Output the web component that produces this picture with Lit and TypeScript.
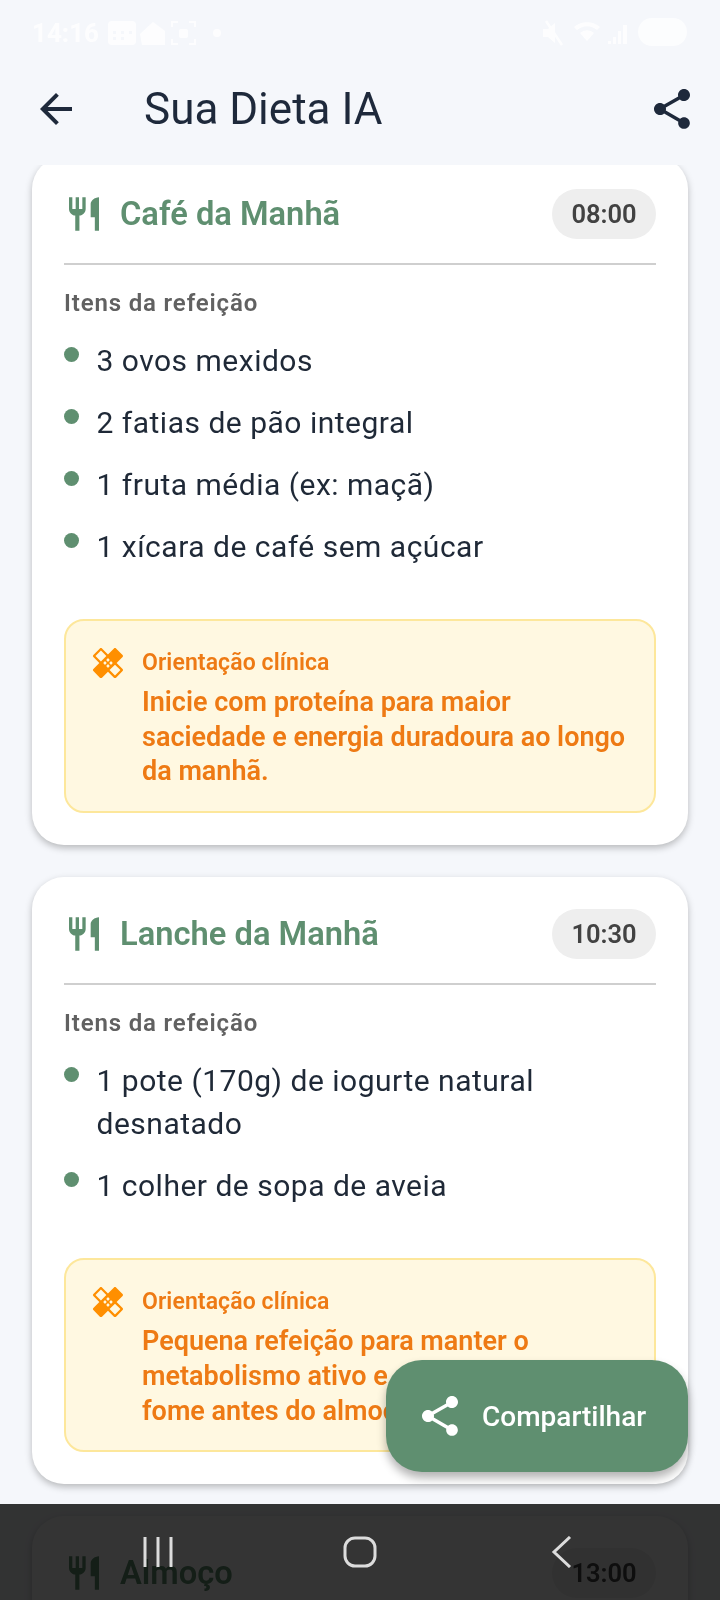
import { LitElement, html, css, svg } from "lit";
import { customElement } from "lit/decorators.js";

interface Meal {
  title: string;
  time: string;
  items: string[];
  note: string;
}

const MEALS: Meal[] = [
  {
    title: "Café da Manhã",
    time: "08:00",
    items: ["3 ovos mexidos", "2 fatias de pão integral", "1 fruta média (ex: maçã)", "1 xícara de café sem açúcar"],
    note: "Inicie com proteína para maior saciedade e energia duradoura ao longo da manhã.",
  },
  {
    title: "Lanche da Manhã",
    time: "10:30",
    items: ["1 pote (170g) de iogurte natural desnatado", "1 colher de sopa de aveia"],
    note: "Pequena refeição para manter o metabolismo ativo e evitar excesso de fome antes do almoço.",
  },
  {
    title: "Almoço",
    time: "13:00",
    items: [],
    note: "",
  },
];

const ICON_SHARE =
  "M18 16.08c-.76 0-1.44.3-1.96.77L8.91 12.7c.05-.23.09-.46.09-.7s-.04-.47-.09-.7l7.05-4.11c.54.5 1.25.81 2.04.81 1.66 0 3-1.34 3-3s-1.34-3-3-3-3 1.34-3 3c0 .24.04.47.09.7L8.04 9.81C7.5 9.31 6.79 9 6 9c-1.66 0-3 1.34-3 3s1.34 3 3 3c.79 0 1.5-.31 2.04-.81l7.12 4.16c-.05.21-.08.43-.08.65 0 1.61 1.31 2.92 2.92 2.92 1.61 0 2.92-1.31 2.92-2.92s-1.31-2.92-2.92-2.92z";
const ICON_BACK = "M20 11H7.83l5.59-5.59L12 4l-8 8 8 8 1.41-1.41L7.83 13H20v-2z";
const ICON_FOOD =
  "M11 9H9V2H7v7H5V2H3v7c0 2.12 1.66 3.84 3.75 3.97V22h2.5v-9.03C11.34 12.84 13 11.12 13 9V2h-2v7zm5-3v8h2.5v8H21V2c-2.76 0-5 2.24-5 4z";
const ICON_HEAL =
  "M17.73 12.02l3.98-3.98c.39-.39.39-1.02 0-1.41l-4.34-4.34c-.39-.39-1.02-.39-1.41 0l-3.98 3.98L8 2.29C7.8 2.1 7.55 2 7.29 2c-.25 0-.51.1-.7.29L2.25 6.63c-.39.39-.39 1.02 0 1.41l3.98 3.98L2.25 16c-.39.39-.39 1.02 0 1.41l4.34 4.34c.39.39 1.02.39 1.41 0l3.98-3.98 3.98 3.98c.2.2.45.29.71.29.26 0 .51-.1.71-.29l4.34-4.34c.39-.39.39-1.02 0-1.41l-3.99-3.98zM12 9c.55 0 1 .45 1 1s-.45 1-1 1-1-.45-1-1 .45-1 1-1zm-4.71 1.96L3.66 7.34l3.63-3.63 3.62 3.62-3.62 3.63zM10 13c-.55 0-1-.45-1-1s.45-1 1-1 1 .45 1 1-.45 1-1 1zm2 2c-.55 0-1-.45-1-1s.45-1 1-1 1 .45 1 1-.45 1-1 1zm2-4c.55 0 1 .45 1 1s-.45 1-1 1-1-.45-1-1 .45-1 1-1zm2.66 9.34l-3.63-3.62 3.63-3.63 3.62 3.62-3.62 3.63z";

function icon(d: string, size: number) {
  return html`<svg class="icon" width=${size} height=${size} viewBox="0 0 24 24" fill="currentColor">
    ${svg`<path d=${d}></path>`}
  </svg>`;
}

@customElement("app-root")
export class AppRoot extends LitElement {
  private renderStatusBar() {
    return html`
      <div class="status">
        <span class="clock">14:16</span>
        <svg width="120" height="32" viewBox="0 0 120 32" fill="#fff">
          <path d="M5 4h20a4 4 0 0 1 4 4v16a4 4 0 0 1-4 4H5a4 4 0 0 1-4-4V8a4 4 0 0 1 4-4zM6 14v3h3v-3zM14 14v3h3v-3zM22 14v3h3v-3zM6 20v3h3v-3zM14 20v3h3v-3z" fill-rule="evenodd"></path>
          <path d="M33 17 L46 5 L58 14 L58 28 L35 28 Z"></path>
          <path d="M65 10V5h6M82 5h6v5M88 22v5h-6M71 27h-6v-5" fill="none" stroke="#fff" stroke-width="2"></path>
          <rect x="72" y="12" width="9" height="9" rx="2"></rect>
          <circle cx="110" cy="16" r="4"></circle>
        </svg>
        <span class="spacer"></span>
        <svg width="156" height="32" viewBox="0 0 156 32" fill="#fff">
          <path d="M11 12h5l7-6v20l-7-6h-5z"></path>
          <path d="M14 4l16 24" stroke="#fff" stroke-width="2.5" fill="none"></path>
          <path d="M42 10a20 20 0 0 1 26 0l-3 3a15 15 0 0 0-20 0zM48 16a10 10 0 0 1 14 0l-7 8z"></path>
          <path d="M76 24h3v3h-3zM81 20h3v7h-3zM86 14h3v13h-3zM91 8h4v19h-4z"></path>
          <rect x="106" y="1" width="49" height="28" rx="14" opacity="0.85"></rect>
        </svg>
      </div>
    `;
  }

  private renderMeal(meal: Meal) {
    return html`
      <section class="card">
        <header class="card-head">
          <span class="food">${icon(ICON_FOOD, 40)}</span>
          <h2>${meal.title}</h2>
          <span class="chip">${meal.time}</span>
        </header>
        <div class="label">Itens da refeição</div>
        <ul>
          ${meal.items.map((item) => html`<li>${item}</li>`)}
        </ul>
        ${meal.note
          ? html`
              <div class="note">
                <span class="heal">${icon(ICON_HEAL, 36)}</span>
                <div>
                  <div class="note-title">Orientação clínica</div>
                  <p>${meal.note}</p>
                </div>
              </div>
            `
          : ""}
      </section>
    `;
  }

  protected render() {
    return html`
      <div class="screen">
        ${this.renderStatusBar()}
        <div class="appbar">
          <span class="back">${icon(ICON_BACK, 48)}</span>
          <h1>Sua Dieta IA</h1>
          <span class="share">${icon(ICON_SHARE, 48)}</span>
        </div>
        <main class="list">
          <div class="scroll">${MEALS.map((m) => this.renderMeal(m))}</div>
        </main>
        <button class="fab">${icon(ICON_SHARE, 48)}<span>Compartilhar</span></button>
        <div class="nav-shade"></div>
        <nav class="nav">
          <svg width="32" height="32" viewBox="0 0 32 32" fill="none" stroke="#dcdcdc" stroke-width="3">
            <path d="M3 1v30M16 1v30M29 1v30"></path>
          </svg>
          <svg width="34" height="32" viewBox="0 0 34 32" fill="none" stroke="#dcdcdc" stroke-width="3">
            <rect x="2" y="2" width="30" height="28" rx="10"></rect>
          </svg>
          <svg width="22" height="32" viewBox="0 0 22 32" fill="none" stroke="#dcdcdc" stroke-width="3">
            <path d="M19 1 L3 16 L19 31"></path>
          </svg>
        </nav>
      </div>
    `;
  }

  static styles = css`
    :host {
      display: block;
      font-family: Roboto, "Noto Sans", sans-serif;
      color: #1f2937;
    }

    .screen {
      position: relative;
      display: flex;
      flex-direction: column;
      width: 720px;
      height: 1600px;
      overflow: hidden;
      background: #f5f7fb;
    }

    .icon {
      display: block;
    }

    .status {
      display: flex;
      align-items: center;
      gap: 8px;
      height: 60px;
      padding: 6px 32px 0;
      box-sizing: border-box;
      flex: none;
      opacity: 0.85;
    }

    .clock {
      font-size: 26px;
      font-weight: 700;
      color: #fff;
    }

    .spacer {
      flex: 1;
    }

    .appbar {
      display: flex;
      align-items: center;
      height: 98px;
      margin-bottom: 7px;
      padding: 0 24px 0 32px;
      flex: none;
    }

    .appbar h1 {
      flex: 1;
      margin: 0 0 0 64px;
      font-size: 44px;
      font-weight: 400;
      color: #1e293b;
    }

    .back,
    .share {
      color: #1e293b;
    }

    .list {
      flex: 1;
      min-height: 0;
      overflow: hidden;
    }

    .scroll {
      display: flex;
      flex-direction: column;
      gap: 32px;
      margin-top: -8px;
      padding: 0 32px;
    }

    .card {
      padding: 32px;
      background: #fff;
      border-radius: 32px;
      box-shadow: 0 3px 7px rgba(0, 0, 0, 0.25);
    }

    .card-head {
      display: flex;
      align-items: center;
      height: 50px;
      padding-bottom: 24px;
      border-bottom: 2px solid #cfcfcf;
    }

    .food {
      color: #5f8f70;
      margin-right: 16px;
    }

    h2 {
      flex: 1;
      margin: 0;
      font-size: 32.7px;
      font-weight: 600;
      color: #5f8f70;
    }

    .chip {
      display: flex;
      align-items: center;
      justify-content: center;
      width: 104px;
      height: 50px;
      border-radius: 25px;
      background: #eeeeee;
      font-size: 25.5px;
      font-weight: 600;
      color: #424242;
    }

    .label {
      margin-top: 23px;
      font-size: 24px;
      font-weight: 600;
      letter-spacing: 0.85px;
      line-height: 30px;
      color: #616161;
    }

    ul {
      display: flex;
      flex-direction: column;
      gap: 19px;
      margin: 21px 0 0;
      padding: 0;
      list-style: none;
    }

    li {
      position: relative;
      padding-left: 32.5px;
      font-size: 30px;
      line-height: 43px;
      letter-spacing: 0.5px;
    }

    li::before {
      content: "";
      position: absolute;
      left: 0;
      top: 8px;
      width: 15px;
      height: 15px;
      border-radius: 50%;
      background: #5f8f70;
    }

    .note {
      display: flex;
      gap: 16px;
      margin-top: 51px;
      padding: 27px 24px 22px 24px;
      background: #fff8e1;
      border: 2px solid #fde79b;
      border-radius: 20px;
    }

    .heal {
      color: #ff8f00;
      flex: none;
      margin-top: -3px;
    }

    .note-title {
      font-size: 23px;
      font-weight: 600;
      letter-spacing: 0.1px;
      line-height: 30px;
      color: #ee7a14;
    }

    .note p {
      margin: 7px 0 0;
      font-size: 27px;
      font-weight: 600;
      line-height: 34.7px;
      color: #ee7a14;
    }

    .fab {
      position: absolute;
      left: 386px;
      top: 1360px;
      display: flex;
      align-items: center;
      gap: 18px;
      width: 302px;
      height: 112px;
      padding: 0 0 0 30px;
      border: none;
      border-radius: 36px;
      background: #5f8f70;
      color: #fff;
      font-family: inherit;
      font-size: 28px;
      font-weight: 500;
      box-shadow: 0 6px 10px rgba(0, 0, 0, 0.3);
    }

    .nav-shade {
      position: absolute;
      left: 0;
      right: 0;
      top: 1504px;
      bottom: 0;
      background: #343434;
      mix-blend-mode: multiply;
    }

    .nav {
      position: absolute;
      left: 0;
      right: 0;
      top: 1536px;
      display: grid;
      grid-template-columns: repeat(3, 202px);
      justify-content: center;
      justify-items: center;
    }
  `;
}
